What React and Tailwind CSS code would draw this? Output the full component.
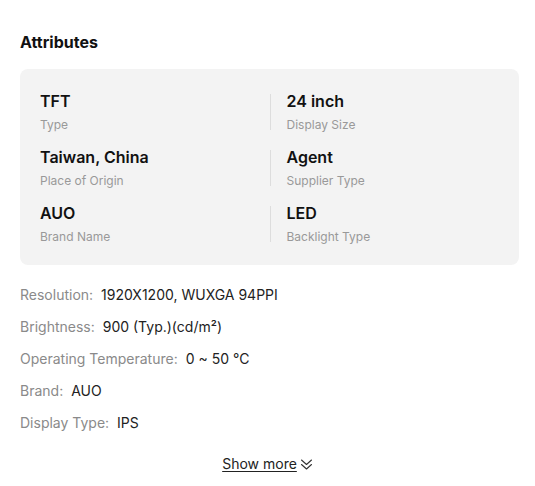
const attrs = [
  { value: "TFT", label: "Type" },
  { value: "24 inch", label: "Display Size" },
  { value: "Taiwan, China", label: "Place of Origin" },
  { value: "Agent", label: "Supplier Type" },
  { value: "AUO", label: "Brand Name" },
  { value: "LED", label: "Backlight Type" },
];

const specs = [
  ["Resolution:", "1920X1200, WUXGA 94PPI"],
  ["Brightness:", "900 (Typ.)(cd/m²)"],
  ["Operating Temperature:", "0 ~ 50 °C"],
  ["Brand:", "AUO"],
  ["Display Type:", "IPS"],
];

function DoubleChevron() {
  return (
    <svg width="13" height="13" viewBox="0 0 13 13" fill="none" stroke="#333" strokeWidth="1.1" strokeLinecap="round" strokeLinejoin="round">
      <path d="M1.5 2 L6.5 6.5 L11.5 2" />
      <path d="M1.5 6.5 L6.5 11 L11.5 6.5" />
    </svg>
  );
}

export default function App() {
  return (
    <div
      className="bg-white pl-5 pr-4 pt-8 min-h-screen text-[#111]"
      style={{ fontFamily: "Inter, 'Liberation Sans', sans-serif" }}
    >
      {/* Heading */}
      <h2 className="text-base font-bold leading-5 mb-[17px]">Attributes</h2>

      {/* Key attributes card */}
      <div className="bg-[#f3f3f3] rounded-lg px-5 pt-[22px] pb-[20px] grid grid-cols-2 gap-y-[14px]">
        {attrs.map((a, i) => (
          <div key={a.label} className="flex items-center">
            {i % 2 === 1 && <div className="w-px h-9 bg-[#dddddd] mr-4" />}
            <div className="flex flex-col gap-[6px]">
              <span className="text-base font-semibold leading-5">{a.value}</span>
              <span className="text-xs leading-4 text-[#999]">{a.label}</span>
            </div>
          </div>
        ))}
      </div>

      {/* Spec list */}
      <div className="mt-5 flex flex-col gap-3 text-sm leading-5">
        {specs.map(([k, v]) => (
          <div key={k} className="flex gap-2">
            <span className="text-[#8a8a8a]">{k}</span>
            <span className="text-[#222]">{v}</span>
          </div>
        ))}
      </div>

      {/* Show more */}
      <div className="mt-[21px] pr-1 flex justify-center">
        <button className="flex items-center gap-[3px] text-sm leading-5 text-[#222]">
          <span className="underline underline-offset-2">Show more</span>
          <DoubleChevron />
        </button>
      </div>
    </div>
  );
}
